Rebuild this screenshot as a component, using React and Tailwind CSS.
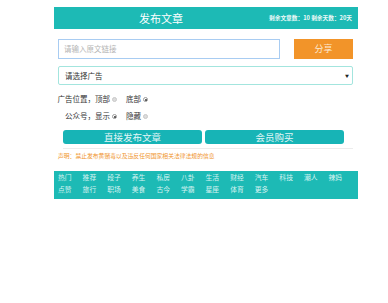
import React from "react";

function Radio({ checked }) {
  return (
    <span
      className={
        "relative inline-block w-[5px] h-[5px] rounded-full ml-[2px] border-[0.5px] " +
        (checked ? "border-[#9a9a9a] bg-white" : "border-[#c8c8c8] bg-[#dcdcdc]")
      }
    >
      {checked ? (
        <span className="absolute left-[1px] top-[1px] w-[2px] h-[2px] rounded-full bg-[#333]" />
      ) : null}
    </span>
  );
}

export default function App() {
  const row1 = ["热门", "推荐", "段子", "养生", "私房", "八卦", "生活", "财经", "汽车", "科技", "潮人", "辣妈"];
  const row2 = ["点赞", "旅行", "职场", "美食", "古今", "学霸", "星座", "体育", "更多"];
  return (
    <div className="w-[388px] h-[303px] bg-white font-['Noto_Sans_CJK_SC','Noto_Sans',sans-serif] overflow-hidden">
      <div className="ml-[54px] w-[304px] pt-[7px]">
        {/* header */}
        <div className="h-[22px] bg-[#1dbab5] flex items-center">
          <div className="w-[214px] text-center text-[11px] leading-[14px] text-white">发布文章</div>
          <div className="flex-1 text-right pr-[6px] text-[5.7px] leading-[8px] font-bold text-[#eefaf9] whitespace-nowrap">
            剩余文章数：10 剩余天数：20天
          </div>
        </div>

        {/* input row */}
        <div className="mt-[10px] pl-[4px] pr-[5px] flex items-center">
          <div className="w-[222px] h-[20px] border border-[#a8ccf2] flex items-center pl-[5px] text-[7.5px] text-[#b5b5b5]">
            请输入原文链接
          </div>
          <div className="ml-auto w-[59px] h-[20px] bg-[#f29429] flex items-center justify-center text-[9px] text-[#fde9d2]">
            分享
          </div>
        </div>

        {/* select */}
        <div className="mt-[7px] ml-[4px] w-[295px] h-[19px] border border-[#a3e5de] rounded-[2px] flex items-center pl-[6px] pr-[3px] text-[7.5px] text-[#333]">
          <span>请选择广告</span>
          <span className="ml-auto text-[4px] text-[#222]">▼</span>
        </div>

        {/* radio rows */}
        <div className="mt-[8px] h-[12px] flex items-center text-[7.5px] text-[#333] whitespace-nowrap">
          <span className="w-[41px] text-right">广告位置，</span>
          <span>顶部</span>
          <Radio />
          <span className="ml-[9px]">底部</span>
          <Radio checked />
        </div>
        <div className="mt-[5px] h-[12px] flex items-center text-[7.5px] text-[#333] whitespace-nowrap">
          <span className="w-[41px] text-right">公众号，</span>
          <span>显示</span>
          <Radio checked />
          <span className="ml-[9px]">隐藏</span>
          <Radio />
        </div>

        {/* buttons */}
        <div className="mt-[8px] pl-[9px] flex gap-[3px]">
          <div className="w-[139px] h-[14px] rounded-[3px] bg-[#17b4b6] flex items-center justify-center text-[9.5px] text-[#e3f7f7]">
            直接发布文章
          </div>
          <div className="w-[139px] h-[14px] rounded-[3px] bg-[#17b4b6] flex items-center justify-center text-[9.5px] text-[#e3f7f7]">
            会员购买
          </div>
        </div>
        <div className="mt-[4px] ml-[9px] w-[290px] h-px bg-[#ececec]" />

        {/* disclaimer */}
        <div className="mt-[3px] pl-[4px] h-[8px] flex items-center text-[5.8px] text-[#f0952d] whitespace-nowrap">
          声明：禁止发布黄赌毒以及违反任何国家相关法律法规的信息
        </div>

        {/* nav */}
        <div className="mt-[11px] bg-[#1dbab5] pl-[4px] pb-[4px]">
          <div className="flex">
            {row1.map((t) => (
              <span key={t} className="w-[24.6px] shrink-0 text-[6.8px] leading-[12px] text-[#d6f3f1] whitespace-nowrap">
                {t}
              </span>
            ))}
          </div>
          <div className="flex">
            {row2.map((t) => (
              <span key={t} className="w-[24.6px] shrink-0 text-[6.8px] leading-[12px] text-[#d6f3f1] whitespace-nowrap">
                {t}
              </span>
            ))}
          </div>
        </div>
      </div>
    </div>
  );
}
